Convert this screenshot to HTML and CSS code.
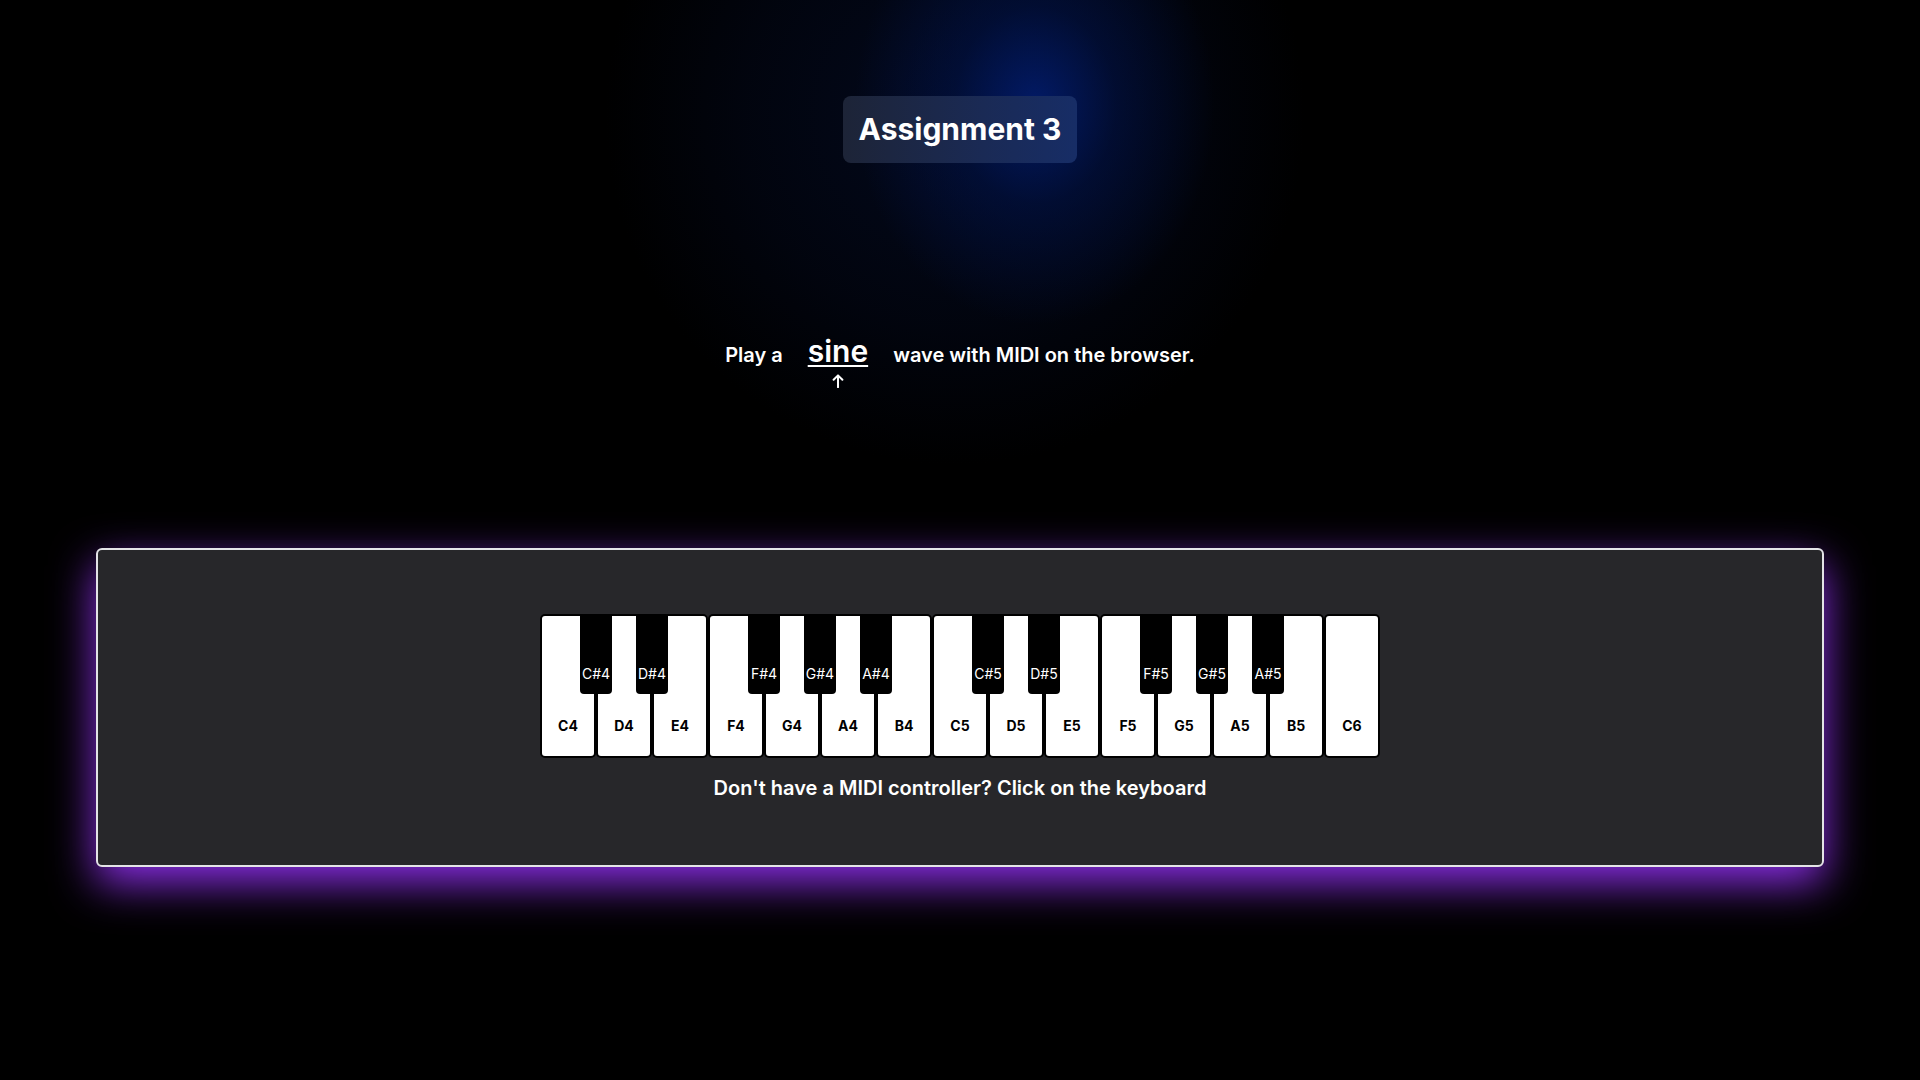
FILE: index.html
```html
<!DOCTYPE html>
<html lang="en">
<head>
<meta charset="utf-8">
<title>Assignment 3</title>
<link rel="stylesheet" href="styles.css">
</head>
<body>
<main class="page">
  <h1 class="title">Assignment 3</h1>
  <div class="prompt">
    <span class="prompt-text">Play a</span>
    <span class="wave-pick">
      <span class="wave-name">sine</span>
      <svg class="arrow" width="12" height="14" viewBox="0 0 12 14" aria-hidden="true">
        <path d="M6 13.2V1.4M1.6 5.8L6 1.4L10.4 5.8" fill="none" stroke="#fff" stroke-width="2" stroke-linecap="round" stroke-linejoin="round"/>
      </svg>
    </span>
    <span class="prompt-text">wave with MIDI on the browser.</span>
  </div>
  <section class="panel">
    <div class="keyboard">
      <div class="white-key"><span>C4</span></div>
      <div class="white-key"><span>D4</span></div>
      <div class="white-key"><span>E4</span></div>
      <div class="white-key"><span>F4</span></div>
      <div class="white-key"><span>G4</span></div>
      <div class="white-key"><span>A4</span></div>
      <div class="white-key"><span>B4</span></div>
      <div class="white-key"><span>C5</span></div>
      <div class="white-key"><span>D5</span></div>
      <div class="white-key"><span>E5</span></div>
      <div class="white-key"><span>F5</span></div>
      <div class="white-key"><span>G5</span></div>
      <div class="white-key"><span>A5</span></div>
      <div class="white-key"><span>B5</span></div>
      <div class="white-key"><span>C6</span></div>
      <div class="black-key" style="left:40px"><span>C#4</span></div>
      <div class="black-key" style="left:96px"><span>D#4</span></div>
      <div class="black-key" style="left:208px"><span>F#4</span></div>
      <div class="black-key" style="left:264px"><span>G#4</span></div>
      <div class="black-key" style="left:320px"><span>A#4</span></div>
      <div class="black-key" style="left:432px"><span>C#5</span></div>
      <div class="black-key" style="left:488px"><span>D#5</span></div>
      <div class="black-key" style="left:600px"><span>F#5</span></div>
      <div class="black-key" style="left:656px"><span>G#5</span></div>
      <div class="black-key" style="left:712px"><span>A#5</span></div>
    </div>
    <p class="hint">Don't have a MIDI controller? Click on the keyboard</p>
  </section>
</main>
</body>
</html>
```

FILE: styles.css
```css
* { box-sizing: border-box; }

html, body {
  margin: 0;
  padding: 0;
}

body {
  min-height: 1080px;
  font-family: "Inter", "Noto Sans", sans-serif;
  color: #fff;
  background-color: #000;
  background-image:
    radial-gradient(ellipse 180px 220px at 1035px 105px, rgba(2, 28, 110, 0.9) 0%, rgba(1, 20, 80, 0.5) 45%, rgba(0, 10, 40, 0) 100%),
    radial-gradient(circle 350px at 955px 115px, rgba(3, 10, 32, 0.9) 0%, rgba(2, 6, 20, 0.7) 60%, rgba(0, 0, 0, 0) 100%);
  background-repeat: no-repeat;
}

.page {
  display: flex;
  flex-direction: column;
  align-items: center;
  padding-top: 96px;
}

.title {
  margin: 0;
  padding: 10px 16px;
  font-size: 30px;
  line-height: 47px;
  font-weight: 700;
  border-radius: 8px;
  background: linear-gradient(90deg, #1d2437 0%, #1a2a55 60%, #172d66 100%);
}

.prompt {
  display: flex;
  align-items: baseline;
  justify-content: center;
  gap: 25px;
  margin-top: 170px;
}

.prompt-text {
  font-size: 20px;
  line-height: 28px;
  font-weight: 600;
}

.wave-pick {
  display: flex;
  flex-direction: column;
  align-items: center;
}

.wave-name {
  font-size: 30px;
  line-height: 36px;
  font-weight: 600;
  text-decoration: underline;
  text-decoration-thickness: 2px;
  text-underline-offset: 3px;
}

.arrow {
  display: block;
  margin-top: 5px;
}

.panel {
  align-self: stretch;
  margin: 160px 96px 0;
  padding: 64px 0 61px;
  background: #27272a;
  border: 2px solid #e4e4e7;
  border-radius: 6px;
  box-shadow: 0 16px 44px rgba(139, 46, 230, 1);
  display: flex;
  flex-direction: column;
  align-items: center;
}

.keyboard {
  position: relative;
  display: flex;
}

.white-key {
  width: 56px;
  height: 144px;
  background: #fff;
  border: 2px solid #000;
  border-radius: 5px;
  display: flex;
  flex-direction: column;
  justify-content: flex-end;
  align-items: center;
  padding-bottom: 22px;
  color: #000;
  font-size: 14px;
  line-height: 17px;
  font-weight: 700;
}

.black-key {
  position: absolute;
  top: 0;
  width: 32px;
  height: 80px;
  background: #000;
  border-radius: 0 0 4px 4px;
  display: flex;
  flex-direction: column;
  justify-content: flex-end;
  align-items: center;
  padding-bottom: 12px;
  color: #fff;
  font-size: 14px;
  line-height: 17px;
  font-weight: 400;
  white-space: nowrap;
}

.hint {
  margin: 16px 0 2px;
  font-size: 20px;
  line-height: 28px;
  font-weight: 600;
}
```
